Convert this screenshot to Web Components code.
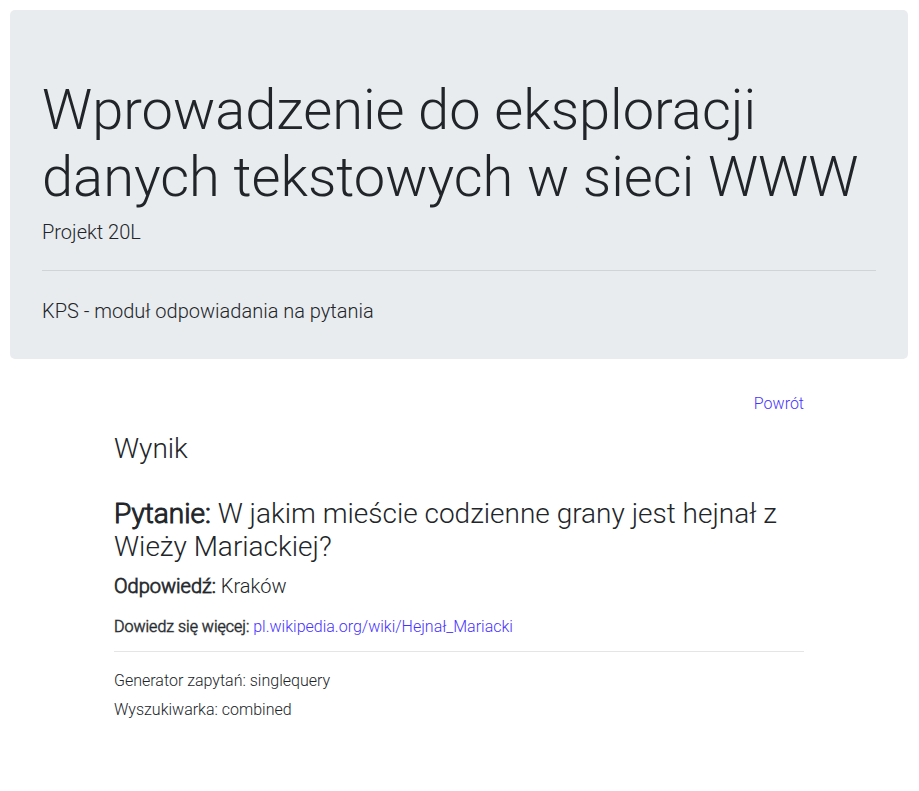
<!DOCTYPE html>
<html lang="pl">
<head>
<meta charset="utf-8">
<meta name="viewport" content="width=device-width, initial-scale=1">
<title>KPS</title>
<style>
body{--link:#4733ff;margin:0;padding:10px 11px 10px 10px;background:#fff;color:#212529;font-family:Roboto,"Open Sans",sans-serif;font-size:16px;font-weight:300;line-height:24px}
</style>
</head>
<body>
<page-banner>
<span slot="title">Wprowadzenie do eksploracji danych tekstowych w sieci WWW</span>
<span slot="lead">Projekt 20L</span>
<span slot="note">KPS - moduł odpowiadania na pytania</span>
</page-banner>
<result-panel>
<answer-card question="W jakim mieście codzienne grany jest hejnał z Wieży Mariackiej?" answer="Kraków" source="pl.wikipedia.org/wiki/Hejnał_Mariacki"></answer-card>
<meta-line>Generator zapytań: singlequery</meta-line>
<meta-line>Wyszukiwarka: combined</meta-line>
</result-panel>
<script>
const define = (name, html) => customElements.define(name, class extends HTMLElement {
  constructor() {
    super();
    this.attachShadow({ mode: 'open' }).innerHTML = html;
  }
});
define('page-banner', `<style>
:host{display:block;background:#e9ecef;border-radius:5px;padding:67px 32px 33px;margin-bottom:33px}
h1{font-size:56px;line-height:67px;font-weight:300;margin:0 0 6px}
p{font-size:20px;line-height:30px;margin:0}
hr{border:0;border-top:1px solid rgba(0,0,0,.1);margin:23px 0 25px}
</style><h1><slot name="title"></slot></h1><p><slot name="lead"></slot></p><hr><p><slot name="note"></slot></p>`);
define('result-panel', `<style>
:host{display:block;max-width:690px;margin:0 auto;padding:0 15px}
nav{text-align:right;margin-bottom:16px}
a{color:var(--link);text-decoration:none}
h2{font-size:28px;line-height:33px;font-weight:300;margin:0 0 32px}
</style><nav><a href="#">Powrót</a></nav><h2>Wynik</h2><slot></slot>`);
define('meta-line', `<style>:host{display:block;margin-bottom:5px}</style><slot></slot>`);
customElements.define('answer-card', class extends HTMLElement {
  constructor() {
    super();
    this.attachShadow({ mode: 'open' }).innerHTML = `<style>
:host{display:block}
h3{font-size:28px;line-height:33px;font-weight:300;margin:0 0 11px}
h4{font-size:20px;line-height:24px;font-weight:300;margin:0 0 17px}
p{margin:0}
b{font-weight:300;-webkit-text-stroke:1px currentColor}
h4 b{-webkit-text-stroke-color:rgba(33,37,41,.75)}
p b{-webkit-text-stroke-color:rgba(33,37,41,.5)}
a{color:var(--link);text-decoration:none}
hr{border:0;border-top:1px solid rgba(0,0,0,.1);margin:12px 0 17px}
</style><h3><b>Pytanie:</b> <span id="q"></span></h3><h4><b>Odpowiedź:</b> <span id="a"></span></h4><p><b>Dowiedz się więcej:</b> <a id="s"></a></p><hr>`;
  }
  connectedCallback() {
    const get = id => this.shadowRoot.getElementById(id);
    get('q').textContent = this.getAttribute('question');
    get('a').textContent = this.getAttribute('answer');
    get('s').textContent = this.getAttribute('source');
    get('s').href = 'https://' + this.getAttribute('source');
  }
});
</script>
</body>
</html>
